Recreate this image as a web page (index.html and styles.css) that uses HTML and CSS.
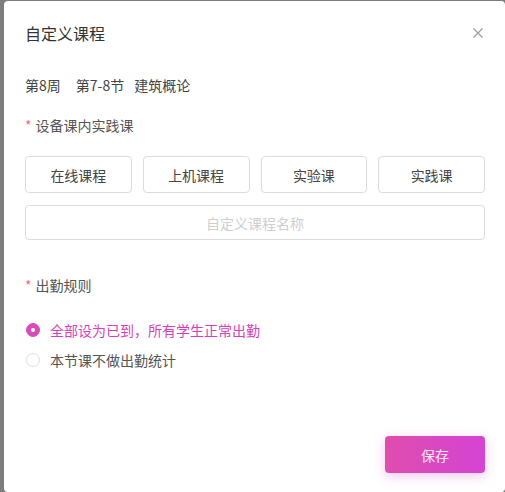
FILE: index.html
```html
<!DOCTYPE html>
<html lang="zh-CN">
<head>
    <meta charset="UTF-8">
    <meta name="viewport" content="width=device-width, initial-scale=1.0">
    <title>自定义课程</title>
    <link rel="stylesheet" href="styles.css">
</head>
<body>
    <div class="modal">
        <div class="modal-header">
            <h2>自定义课程</h2>
            <span class="modal-close">
                <svg width="10" height="10" viewBox="0 0 10 10">
                    <path d="M0.5 0.5 L9.5 9.5 M9.5 0.5 L0.5 9.5" stroke="#9a9a9a" stroke-width="1.1" fill="none"/>
                </svg>
            </span>
        </div>

        <div class="course-info">
            <span>第8周</span><span class="gap-wide">第7-8节</span><span class="gap">建筑概论</span>
        </div>

        <div class="field-label"><span class="required">*</span>设备课内实践课</div>
        <div class="type-grid">
            <button class="type-btn">在线课程</button>
            <button class="type-btn">上机课程</button>
            <button class="type-btn">实验课</button>
            <button class="type-btn">实践课</button>
        </div>
        <input class="custom-name" type="text" placeholder="自定义课程名称">

        <div class="field-label attendance-label"><span class="required">*</span>出勤规则</div>
        <div class="radio-list">
            <label class="radio-item checked">
                <span class="radio-dot"></span>
                全部设为已到，所有学生正常出勤
            </label>
            <label class="radio-item">
                <span class="radio-dot"></span>
                本节课不做出勤统计
            </label>
        </div>

        <div class="modal-footer">
            <button class="save-btn">保存</button>
        </div>
    </div>
</body>
</html>
```

FILE: styles.css
```css
body {
    margin: 0;
    padding: 0;
    background-color: #7d7d7d;
    font-family: "Noto Sans CJK SC", "Noto Sans", sans-serif;
    color: #444;
    overflow: hidden;
}
.modal {
    margin: 1px 0 0 4px;
    width: 501px;
    height: 491px;
    box-sizing: border-box;
    padding: 0 20px 0 21px;
    background: white;
    border-radius: 4px;
}
.modal-header {
    height: 64px;
    display: flex;
    align-items: center;
    justify-content: space-between;
}
.modal-header h2 {
    margin: 0;
    font-size: 16px;
    font-weight: normal;
    color: #333;
    line-height: 20px;
}
.modal-close {
    display: flex;
    margin-right: 2px;
    margin-top: -1px;
}
.course-info {
    margin-top: 10px;
    font-size: 14px;
    line-height: 20px;
    color: #444;
}
.course-info .gap-wide {
    margin-left: 15px;
}
.course-info .gap {
    margin-left: 10px;
}
.field-label {
    margin-top: 20px;
    font-size: 14px;
    line-height: 20px;
    color: #555;
}
.required {
    color: #f56c6c;
    margin-right: 4px;
}
.type-grid {
    margin-top: 21px;
    display: grid;
    grid-template-columns: repeat(4, 1fr);
    gap: 11px;
}
.type-btn {
    height: 37px;
    border: 1px solid #dcdcdc;
    border-radius: 4px;
    background: white;
    font-family: inherit;
    font-size: 14px;
    color: #444;
    padding: 0;
}
.custom-name {
    display: block;
    margin-top: 12px;
    width: 100%;
    height: 35px;
    box-sizing: border-box;
    border: 1px solid #dcdcdc;
    border-radius: 4px;
    text-align: center;
    font-family: inherit;
    font-size: 14px;
    outline: none;
}
.custom-name::placeholder {
    color: #cfcfcf;
}
.attendance-label {
    margin-top: 35px;
}
.radio-list {
    margin-top: 25px;
    display: flex;
    flex-direction: column;
    gap: 10px;
}
.radio-item {
    display: flex;
    align-items: center;
    font-size: 14px;
    line-height: 20px;
    color: #555;
}
.radio-dot {
    width: 14px;
    height: 14px;
    box-sizing: border-box;
    border: 1px solid #dcdfe6;
    border-radius: 50%;
    margin-right: 10px;
    margin-left: 1px;
    display: flex;
    align-items: center;
    justify-content: center;
}
.radio-item.checked {
    color: #d63fbb;
}
.radio-item.checked .radio-dot {
    background: #d84bbd;
    border-color: #d84bbd;
}
.radio-item.checked .radio-dot::after {
    content: "";
    width: 4px;
    height: 4px;
    border-radius: 50%;
    background: white;
}
.modal-footer {
    margin-top: 66px;
    display: flex;
    justify-content: flex-end;
}
.save-btn {
    width: 100px;
    height: 37px;
    border: none;
    border-radius: 4px;
    background: linear-gradient(90deg, #df4dae, #d444d4);
    box-shadow: 0 3px 12px rgba(214, 70, 200, 0.3);
    color: #fbe8f6;
    font-family: inherit;
    font-size: 14px;
}
```
